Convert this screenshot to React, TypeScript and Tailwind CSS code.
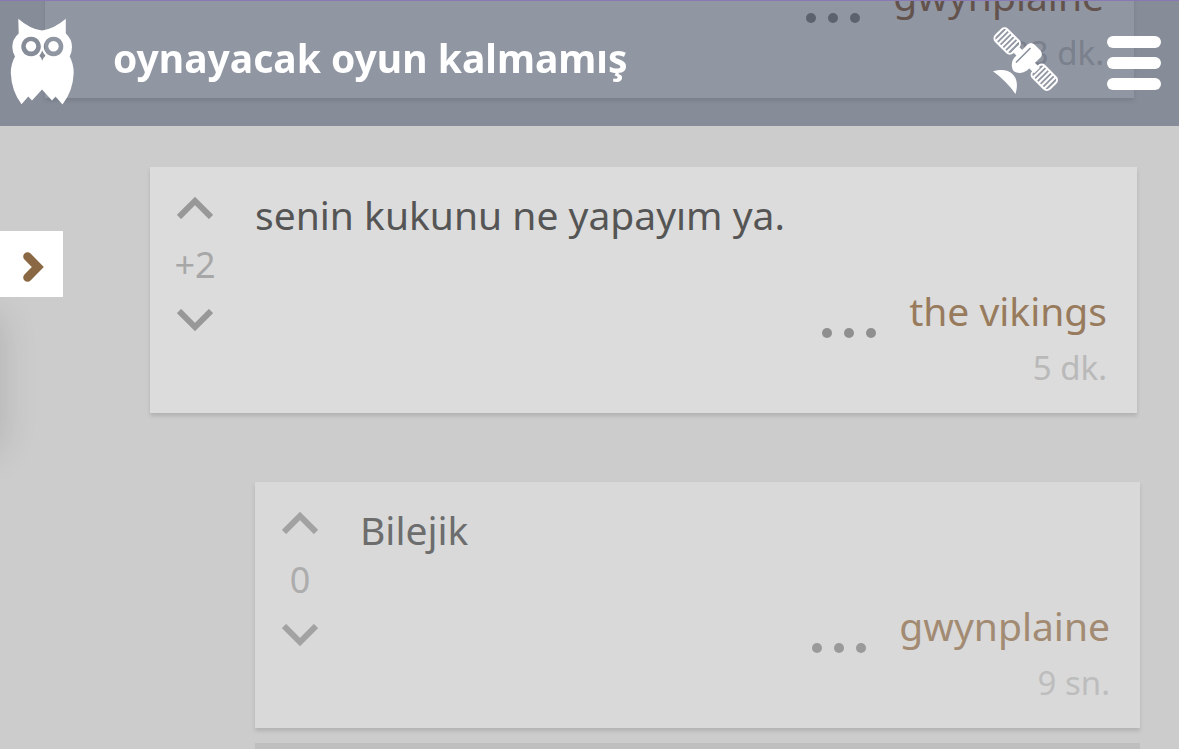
type Entry = {
  text: string;
  score: string;
  author: string;
  time: string;
  card: string;
  textColor: string;
  scoreColor: string;
  arrowColor: string;
  authorColor: string;
  timeColor: string;
  dotColor: string;
};

const entries: Entry[] = [
  {
    text: "",
    score: "",
    author: "gwynplaine",
    time: "23 dk.",
    card: "ml-[45px] mr-[45px] h-[446px] bg-[#e0e0e0]",
    textColor: "text-[#404040]",
    scoreColor: "text-[#a0a0a0]",
    arrowColor: "text-[#888888]",
    authorColor: "text-[#865a34]",
    timeColor: "text-[#b4b4b4]",
    dotColor: "bg-[#787878]",
  },
  {
    text: "senin kukunu ne yapayım ya.",
    score: "+2",
    author: "the vikings",
    time: "5 dk.",
    card: "ml-[150px] mr-[42px] bg-[#dcdcdc]",
    textColor: "text-[#555555]",
    scoreColor: "text-[#a7a7a7]",
    arrowColor: "text-[#989898]",
    authorColor: "text-[#987b5d]",
    timeColor: "text-[#b9b9b9]",
    dotColor: "bg-[#8f8f8f]",
  },
  {
    text: "Bilejik",
    score: "0",
    author: "gwynplaine",
    time: "9 sn.",
    card: "ml-[255px] mr-[39px] bg-[#d9d9d9]",
    textColor: "text-[#6d6d6d]",
    scoreColor: "text-[#adadad]",
    arrowColor: "text-[#a2a2a2]",
    authorColor: "text-[#a28b72]",
    timeColor: "text-[#bdbdbd]",
    dotColor: "bg-[#9a9a9a]",
  },
];

const Owl = () => (
  <svg width="66" height="88" viewBox="10 18 66 88" aria-hidden="true">
    <path
      fill="#fff"
      fillRule="evenodd"
      d="M18.3 18.7 Q30 29 42 30.5 Q54 29 65.8 18.8 V33.5 Q72 39 72 47 Q72 52 69.7 56.5 Q73.7 64 73.7 73 Q73 91 62.5 104.5 L55.5 96.5 L52 100.5 L42 89.5 L32 100.5 L28.3 96.5 L21.5 104.3 Q11.5 91 10.8 73 Q10.8 64 15 56.5 Q12.3 52 12.3 47 Q12.3 39 18.7 33.5 Z
      M31 36.7 a9.8 9.8 0 1 0 0.1 0 Z M53.5 36.7 a9.8 9.8 0 1 0 0.1 0 Z M42.2 50.5 Q41.5 53 39.3 55.8 Q41.3 57.5 42.2 60.8 Q43.3 57.5 45.5 55.8 Q43 53 42.2 50.5 Z"
    />
    <circle cx="31" cy="46.3" r="5.2" fill="#fff" />
    <circle cx="53.5" cy="46.3" r="5.2" fill="#fff" />
  </svg>
);

const Satellite = () => (
  <svg width="66" height="68" viewBox="993 26 66 68" fill="none" aria-hidden="true">
    <g stroke="#fff">
      <g transform="translate(1007.2 41) rotate(45)">
        <rect x="-12" y="-8.3" width="24" height="16.6" rx="4" strokeWidth="2" />
        <path d="M-7.9 -8V8M-4 -8V8M-0.1 -8V8M3.8 -8V8M7.7 -8V8" strokeWidth="2.1" />
      </g>
      <g transform="translate(1044.3 77.3) rotate(45)">
        <rect x="-12" y="-8.3" width="24" height="16.6" rx="4" strokeWidth="2" />
        <path d="M-7.7 -8V8M-3.8 -8V8M0.1 -8V8M4 -8V8M7.9 -8V8" strokeWidth="2.1" />
      </g>
      <path d="M1015 48.5 L1037 70.5" strokeWidth="8" />
    </g>
    <path
      fill="#fff"
      d="M1027.5 44.5 Q1031 41.5 1034.5 44.5 L1040.5 50.5 Q1043 54 1041 57 L1027 70.5 Q1022 74 1016.5 72.5 Q1012.5 71.5 1012 67 Q1011 62 1014 58 Z"
    />
    <path d="M1016 62.5 L1030.5 48" stroke="#858b98" strokeWidth="1.5" />
    <path fill="#fff" d="M993 71.3 C1001 69 1008 69.5 1012.5 74 C1017.5 79 1018 86 1015.5 94 Q1011 87.5 1005 81.5 Q1000 76.5 993 71.3 Z" />
  </svg>
);

const Arrow = ({ down = false }: { down?: boolean }) => (
  <svg width="36" height="22" viewBox="0 0 36 22" fill="none" stroke="currentColor" strokeWidth="6" aria-hidden="true">
    <path d={down ? "M2 2 L18 18 L34 2" : "M2 20 L18 4 L34 20"} />
  </svg>
);

const EntryCard = ({ entry }: { entry: Entry }) => (
  <article className={`flex shadow-[0_3px_4px_rgba(0,0,0,0.13)] ${entry.card}`}>
    <div className={`flex w-[90px] shrink-0 flex-col items-center gap-[21px] pt-[30px] ${entry.arrowColor}`}>
      <button type="button" aria-label="Artı oy" className="flex">
        <Arrow />
      </button>
      <span className={`h-12 text-[36px] leading-[50px] ${entry.scoreColor}`}>{entry.score}</span>
      <button type="button" aria-label="Eksi oy" className="flex">
        <Arrow down />
      </button>
    </div>
    <div className="flex min-w-0 flex-1 flex-col pt-[18px] pr-[30px] pb-[21px] pl-[15px]">
      <p className={`min-h-[60px] flex-1 text-[39px] leading-[60px] ${entry.textColor}`}>{entry.text}</p>
      <div className="mt-9 flex items-end justify-end gap-[33px]">
        <button type="button" aria-label="Seçenekler" className="flex gap-3 pb-[3px]">
          <span className={`size-[10px] rounded-full ${entry.dotColor}`} />
          <span className={`size-[10px] rounded-full ${entry.dotColor}`} />
          <span className={`size-[10px] rounded-full ${entry.dotColor}`} />
        </button>
        <a href="#" className={`text-[39px] leading-[60px] ${entry.authorColor}`}>
          {entry.author}
        </a>
      </div>
      <p className={`mt-[3px] text-right text-[33px] leading-[48px] ${entry.timeColor}`}>{entry.time}</p>
    </div>
  </article>
);

const Header = () => (
  <header className="fixed inset-x-0 top-0 z-20 flex h-[126px] items-start border-t border-[#8878b4] bg-[#404c64]/50 bg-clip-padding pr-[18px] pl-[10px]">
    <a href="#" aria-label="Ana sayfa" className="mt-[17px]">
      <Owl />
    </a>
    <h1 className="mt-[27px] ml-[37px] min-w-0 flex-1 truncate text-[39px] leading-[60px] font-bold text-white">
      oynayacak oyun kalmamış
    </h1>
    <a href="#" aria-label="Uydu" className="mt-[25px]">
      <Satellite />
    </a>
    <button type="button" aria-label="Menü" className="mt-[35px] ml-12 flex w-[54px] flex-col gap-[9px]">
      <span className="h-3 w-full rounded-full bg-white" />
      <span className="h-3 w-full rounded-full bg-white" />
      <span className="h-3 w-full rounded-full bg-white" />
    </button>
  </header>
);

export default function App() {
  return (
    <div className="relative h-screen overflow-hidden bg-[#cccccc] font-['Noto_Sans',sans-serif]">
      <Header />

      {/* Entries, scrolled under the header */}
      <main className="-mt-[348px] flex flex-col gap-[69px]">
        {entries.map((entry) => (
          <EntryCard key={entry.author + entry.time} entry={entry} />
        ))}
      </main>
      <div className="mt-[15px] mr-[39px] ml-[255px] h-[246px] bg-[#bfbfbf]" />

      {/* Closed drawer, only its shadow shows */}
      <aside className="absolute top-[315px] -left-[200px] h-[135px] w-[200px] shadow-[0_0_36px_rgba(0,0,0,0.14)]" />
      <button
        type="button"
        aria-label="Paneli aç"
        className="absolute top-[231px] left-0 z-10 flex h-[66px] w-[63px] items-center justify-end bg-white pt-[6px] pr-[18px]"
      >
        <svg width="22" height="30" viewBox="0 0 22 30" aria-hidden="true">
          <path d="M4.5 4.5 L14.8 15 L4.5 25.5" fill="none" stroke="#8a6843" strokeWidth="8.6" strokeLinecap="round" />
        </svg>
      </button>
    </div>
  );
}
